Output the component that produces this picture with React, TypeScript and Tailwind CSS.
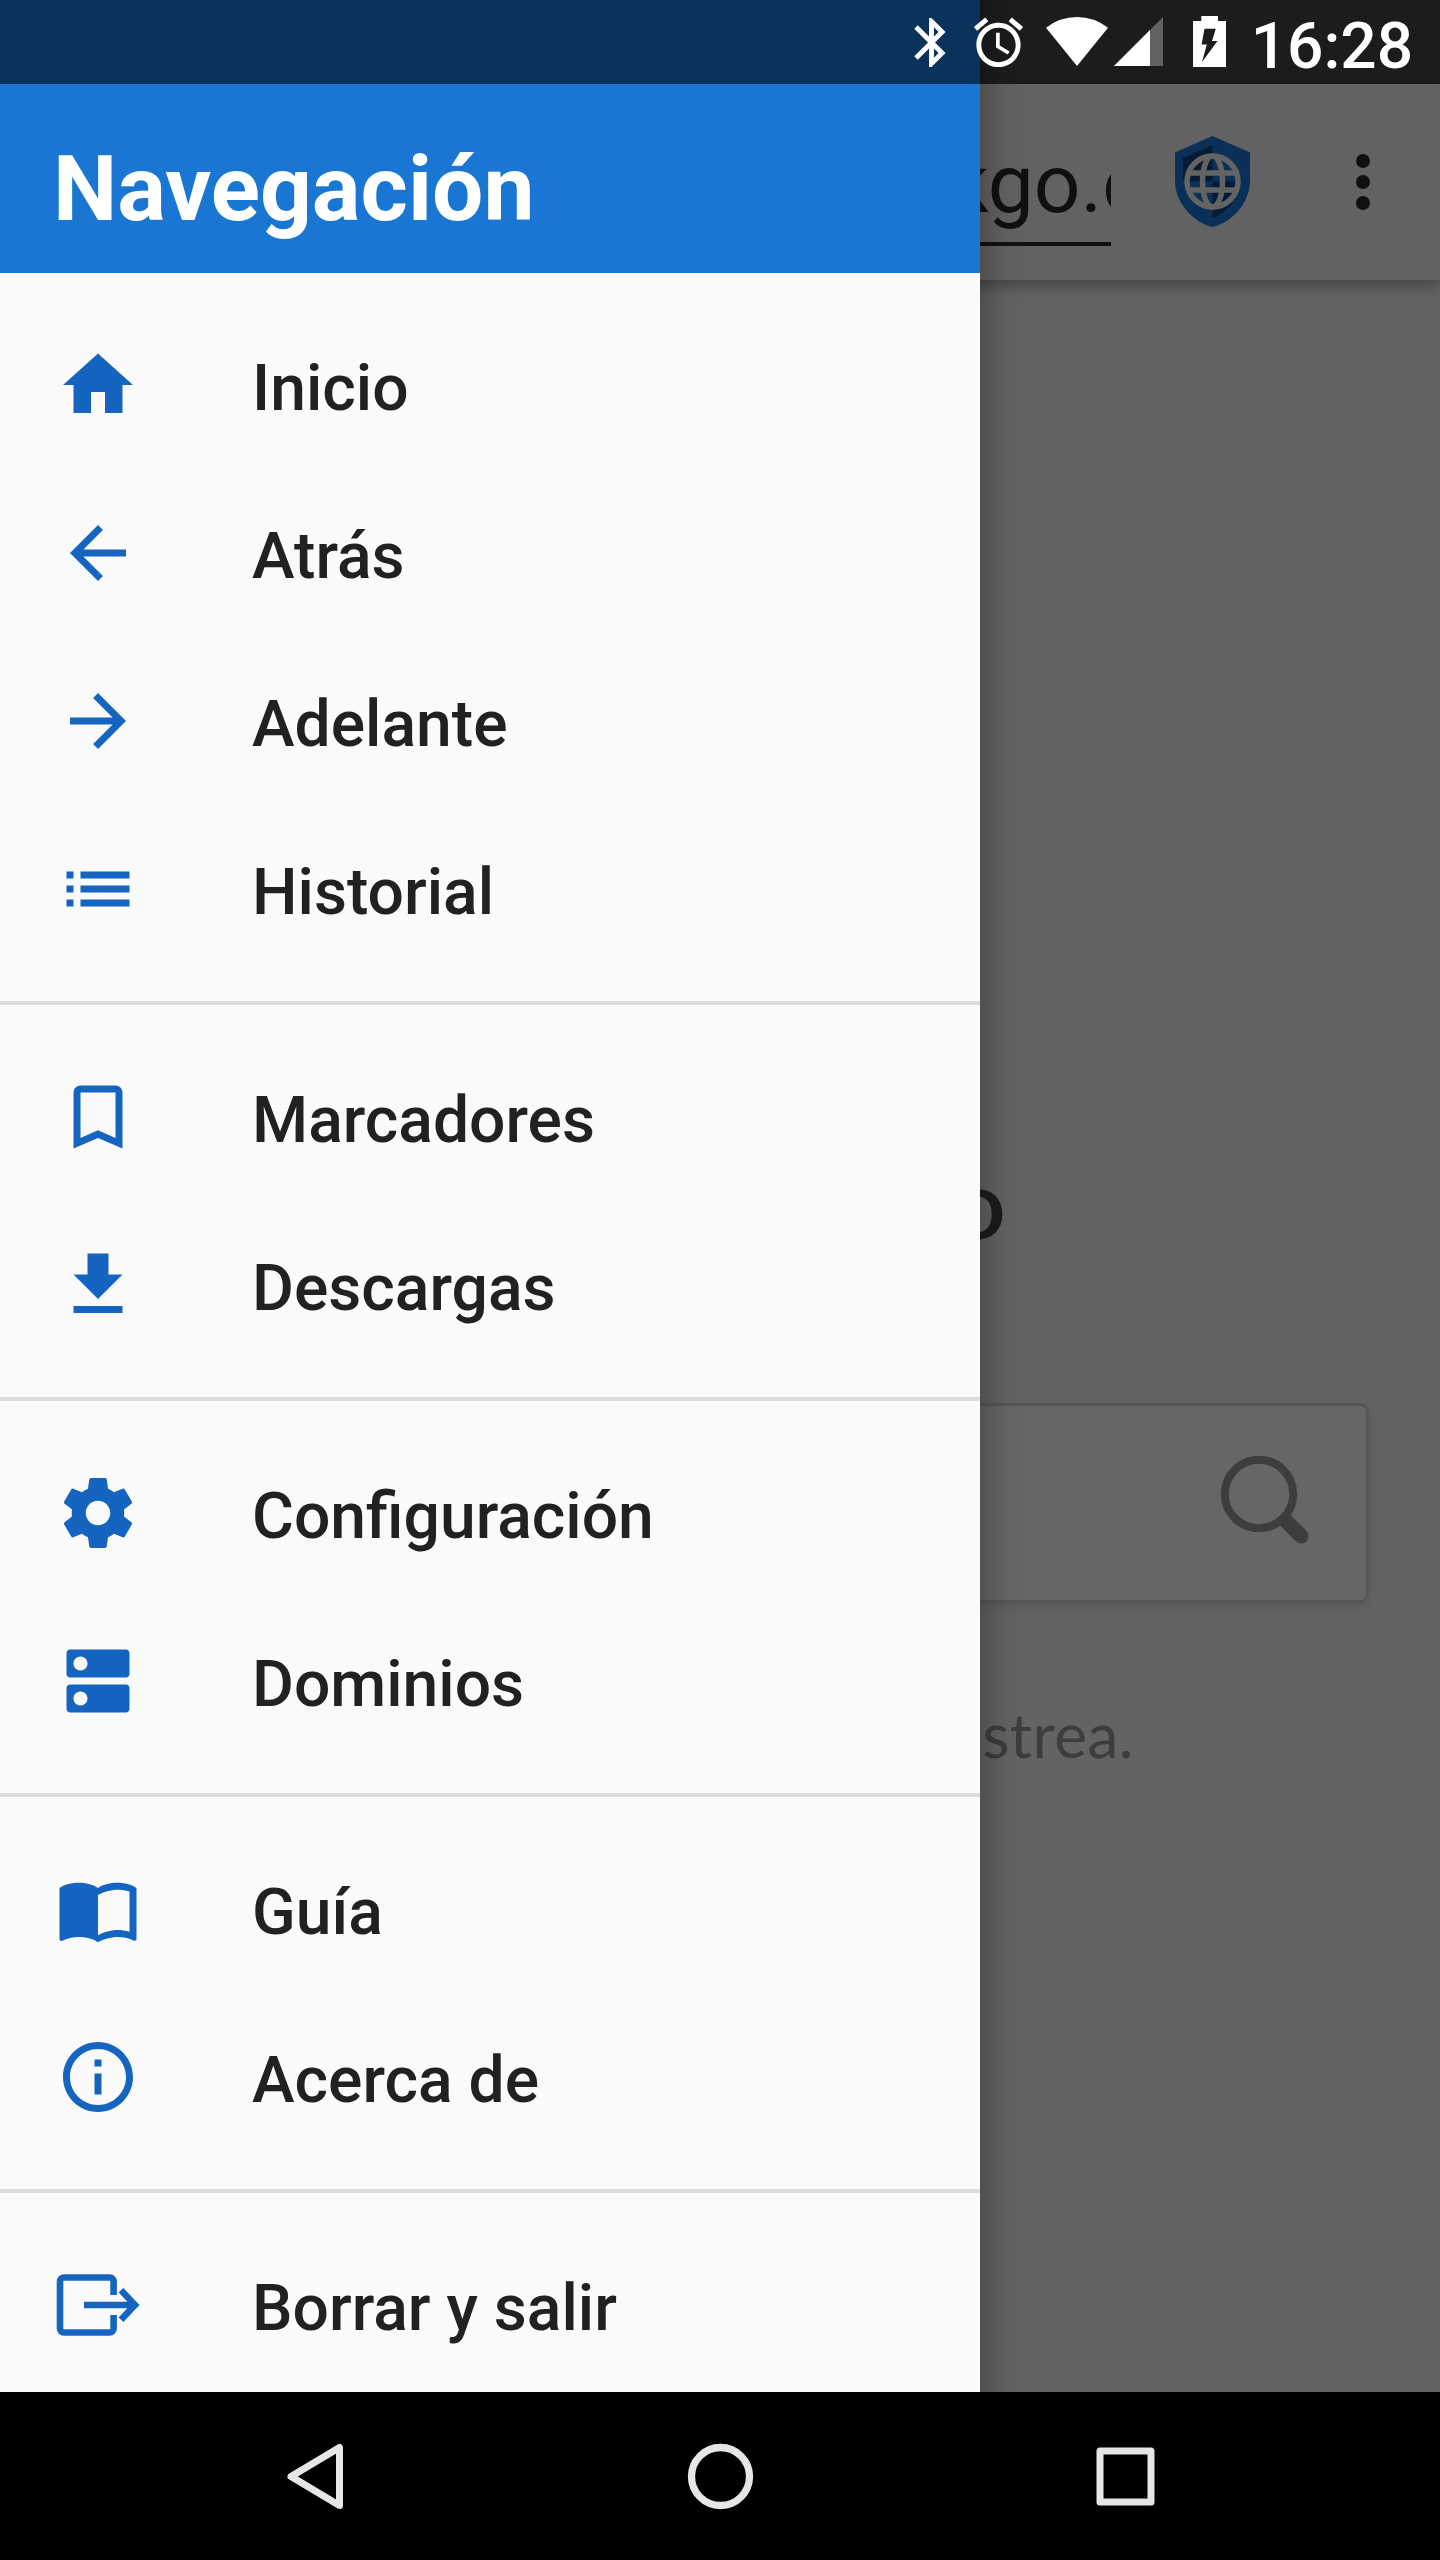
import React from "react";

const ICONS: Record<string, React.ReactNode> = {
  home: <path d="M10 20v-6h4v6h5v-8h3L12 3 2 12h3v8z" />,
  back: <path d="M20 11H7.83l5.59-5.59L12 4l-8 8 8 8 1.41-1.41L7.83 13H20v-2z" />,
  forward: <path d="M12 4l-1.41 1.41L16.17 11H4v2h12.17l-5.58 5.59L12 20l8-8z" />,
  list: <path d="M3 13h2v-2H3v2zm0 4h2v-2H3v2zm0-8h2V7H3v2zm4 4h14v-2H7v2zm0 4h14v-2H7v2zM7 7v2h14V7H7z" />,
  bookmark: <path d="M17 3H7c-1.1 0-1.99.9-1.99 2L5 21l7-3 7 3V5c0-1.1-.9-2-2-2zm0 15l-5-2.18L7 18V5h10v13z" />,
  download: <path d="M19 9h-4V3H9v6H5l7 7 7-7zM5 18v2h14v-2H5z" />,
  settings: (
    <path d="M19.43 12.98c.04-.32.07-.64.07-.98s-.03-.66-.07-.98l2.11-1.65c.19-.15.24-.42.12-.64l-2-3.46c-.12-.22-.39-.3-.61-.22l-2.49 1c-.52-.4-1.08-.73-1.69-.98l-.38-2.65C14.46 2.18 14.25 2 14 2h-4c-.25 0-.46.18-.49.42l-.38 2.65c-.61.25-1.17.59-1.69.98l-2.49-1c-.23-.09-.49 0-.61.22l-2 3.46c-.13.22-.07.49.12.64l2.11 1.65c-.04.32-.07.65-.07.98s.03.66.07.98l-2.11 1.65c-.19.15-.24.42-.12.64l2 3.46c.12.22.39.3.61.22l2.49-1c.52.4 1.08.73 1.69.98l.38 2.65c.03.24.24.42.49.42h4c.25 0 .46-.18.49-.42l.38-2.65c.61-.25 1.17-.59 1.69-.98l2.49 1c.23.09.49 0 .61-.22l2-3.46c.12-.22.07-.49-.12-.64l-2.11-1.65zM12 15.5c-1.93 0-3.5-1.57-3.5-3.5s1.57-3.5 3.5-3.5 3.5 1.57 3.5 3.5-1.57 3.5-3.5 3.5z" />
  ),
  dns: (
    <path d="M20 13H4c-.55 0-1 .45-1 1v6c0 .55.45 1 1 1h16c.55 0 1-.45 1-1v-6c0-.55-.45-1-1-1zM7 19c-1.1 0-2-.9-2-2s.9-2 2-2 2 .9 2 2-.9 2-2 2zM20 3H4c-.55 0-1 .45-1 1v6c0 .55.45 1 1 1h16c.55 0 1-.45 1-1V4c0-.55-.45-1-1-1zM7 9c-1.1 0-2-.9-2-2s.9-2 2-2 2 .9 2 2-.9 2-2 2z" />
  ),
  book: (
    <path d="M21 5c-1.11-.35-2.33-.5-3.5-.5-1.95 0-4.05.4-5.5 1.5-1.45-1.1-3.55-1.5-5.5-1.5S2.45 4.9 1 6v14.65c0 .25.25.5.5.5.1 0 .15-.05.25-.05C3.1 20.45 5.05 20 6.5 20c1.95 0 4.05.4 5.5 1.5 1.35-.85 3.8-1.5 5.5-1.5 1.65 0 3.35.3 4.75 1.05.1.05.15.05.25.05.25 0 .5-.25.5-.5V6c-.6-.45-1.25-.75-2-1zm0 13.5c-1.1-.35-2.3-.5-3.5-.5-1.7 0-4.15.65-5.5 1.5V8c1.35-.85 3.8-1.5 5.5-1.5 1.2 0 2.4.15 3.5.5v11.5z" />
  ),
  info: (
    <path d="M11 17h2v-6h-2v6zm1-15C6.48 2 2 6.48 2 12s4.48 10 10 10 10-4.48 10-10S17.52 2 12 2zm0 18c-4.41 0-8-3.59-8-8s3.59-8 8-8 8 3.59 8 8-3.59 8-8 8zM11 9h2V7h-2v2z" />
  ),
  exit: (
    <g transform="scale(0.285714)" fill="none" stroke="currentColor" strokeWidth="6.6">
      <path d="M57.6 32V18.5a4 4 0 0 0-4-4H8a4 4 0 0 0-4 4v47a4 4 0 0 0 4 4h45.6a4 4 0 0 0 4-4V52" />
      <path d="M28 42h51M65 27.3L79 42 65 56.7" />
    </g>
  ),
};

const SECTIONS = [
  [["home", "Inicio"], ["back", "Atrás"], ["forward", "Adelante"], ["list", "Historial"]],
  [["bookmark", "Marcadores"], ["download", "Descargas"]],
  [["settings", "Configuración"], ["dns", "Dominios"]],
  [["book", "Guía"], ["info", "Acerca de"]],
  [["exit", "Borrar y salir"]],
];

function StatusIcons() {
  return (
    <div className="flex h-[84px] items-start justify-end pr-[27px] text-white">
      <svg className="mt-[13px] size-[59px]" viewBox="0 0 24 24" fill="currentColor">
        <path d="M17.71 7.71L12 2h-1v7.59L6.41 5 5 6.41 10.59 12 5 17.59 6.41 19 11 14.41V22h1l5.71-5.71-4.3-4.29 4.3-4.29zM13 5.83l1.88 1.88L13 9.59V5.83zm1.88 10.46L13 18.17v-3.76l1.88 1.88z" />
      </svg>
      <svg className="mt-[13px] ml-[8px] size-[59px]" viewBox="0 0 24 24" fill="currentColor">
        <path d="M22 5.72l-4.6-3.86-1.29 1.53 4.6 3.86L22 5.72zM7.88 3.39L6.6 1.86 2 5.71l1.29 1.53 4.59-3.85zM12.5 8H11v6l4.75 2.85.75-1.23-4-2.37V8zM12 4c-4.97 0-9 4.03-9 9s4.02 9 9 9c4.97 0 9-4.03 9-9s-4.03-9-9-9zm0 16c-3.87 0-7-3.13-7-7s3.13-7 7-7 7 3.13 7 7-3.13 7-7 7z" />
      </svg>
      <svg className="mt-[17px] ml-[18px] h-[49px] w-[62px]" viewBox="0 0 62 49" fill="currentColor">
        <path d="M31 49L0 10.7Q14 0 31 0T62 10.7z" />
      </svg>
      <svg className="mt-[17px] ml-[6px] h-[49px] w-[49px]" viewBox="0 0 49 49">
        <path d="M49 0v49H0z" fill="#626262" />
        <path d="M36 13v36H0z" fill="currentColor" />
      </svg>
      <svg className="mt-[16px] ml-[30px] h-[51px] w-[33px]" viewBox="0 0 33 51">
        <path d="M8.3 0h16.7v5H33v46H0V5h8.3z" fill="currentColor" />
        <path d="M11.5 12.7h11.3L19 25h5.5L9 46l4.8-17.5H8.6z" fill="#1c1c1c" />
      </svg>
      <span className="mt-[9px] ml-[25px] text-[64px] leading-[75px] font-medium">16:28</span>
    </div>
  );
}

function Shield() {
  return (
    <svg className="h-[91px] w-[75px]" viewBox="0 0 75 91">
      <path d="M37.5 0L75 16.5V45C75 66 58 86 37.5 91 17 86 0 66 0 45V16.5z" fill="#0a3057" />
      <path d="M37.5 9v36H8V22z" fill="#051a35" />
      <path d="M37.5 82C50 77 60 66 64 55L37.5 60z" fill="#051a35" />
      <circle cx="37.5" cy="45.5" r="25.5" fill="#0a3057" />
      <path d="M37.5 45.5H63A25.5 25.5 0 0 1 37.5 71z" fill="#051a35" />
      <path d="M37.5 20v25.5H12A25.5 25.5 0 0 1 37.5 20z" fill="#051a35" />
      <g fill="none" stroke="#636363" strokeWidth="5.5">
        <circle cx="37.5" cy="45.5" r="25.5" />
        <ellipse cx="37.5" cy="45.5" rx="10" ry="25.5" />
        <path d="M15 37h45M15 54h45" />
      </g>
    </svg>
  );
}

function Page() {
  return (
    <div className="flex h-[2392px] flex-col bg-[#636363]">
      <div className="h-[84px] shrink-0 bg-[#1c1c1c]" />
      <div className="flex h-[196px] shrink-0 bg-[#626262] shadow-[0_6px_14px_rgba(0,0,0,0.3)]">
        <div className="flex h-[162px] w-[1111px] overflow-hidden border-b-4 border-[#101010] pl-[947px] text-[82px] leading-[96px] text-[#101010]">
          <span className="mt-[52px] whitespace-nowrap">kgo.c</span>
        </div>
        <div className="mt-[52px] ml-[64px]">
          <Shield />
        </div>
        <div className="mt-[70px] ml-[106px] flex flex-col gap-[7px]">
          <i className="block size-[14px] rounded-full bg-[#101010]" />
          <i className="block size-[14px] rounded-full bg-[#101010]" />
          <i className="block size-[14px] rounded-full bg-[#101010]" />
        </div>
      </div>
      <div className="mt-[864px] flex w-[1007px] justify-end font-[Lato] text-[96px] leading-[116px] font-medium text-[#1c1c1c]">
        <span className="origin-right scale-x-110">o</span>
      </div>
      <div className="mt-[143px] ml-[71px] flex h-[200px] w-[1298px] items-start justify-end rounded-[9px] border-[3px] border-[#575757] bg-[#666666] pt-[50px] pr-[56px] shadow-[0_4px_12px_rgba(0,0,0,0.1)]">
        <svg className="h-[90px] w-[90px]" viewBox="0 0 90 90" fill="none" stroke="#3d3d3d">
          <circle cx="39" cy="38" r="34.2" strokeWidth="8" />
          <path d="M65 64l16 16" strokeWidth="15" strokeLinejoin="round" />
          <path d="M78 77l3.5 3.5" strokeWidth="14" strokeLinecap="round" />
        </svg>
      </div>
      <div className="mt-[91px] flex w-[1134px] justify-end font-[Lato] text-[62px] leading-[80px] tracking-[0.5px] whitespace-nowrap text-[#3d3d3d]">
        strea.
      </div>
    </div>
  );
}

function Drawer() {
  return (
    <aside className="absolute top-0 left-0 h-[2392px] w-[980px] overflow-hidden bg-[#fafafa]">
      <div className="h-[84px] bg-[#0a335c]" />
      <div className="flex h-[189px] items-center bg-[#1976d3] pt-[21px] pl-[53px] text-[91px] font-bold text-white">Navegación</div>
      {SECTIONS.map((items, i) => (
        <ul key={i} className={i ? "border-t-4 border-[#dcdcdc] py-[28px]" : "py-[28px]"}>
          {items.map(([icon, label]) => (
            <li key={label} className="flex h-[168px] items-center pl-[56px]">
              <svg className="size-[84px] text-[#1565c0]" viewBox="0 0 24 24" fill="currentColor">
                {ICONS[icon]}
              </svg>
              <span className="ml-[112px] pt-[6px] text-[64.2px] leading-[75px] font-medium text-[#212121]">{label}</span>
            </li>
          ))}
        </ul>
      ))}
    </aside>
  );
}

export default function App() {
  return (
    <div className="relative h-[2560px] w-[1440px] overflow-hidden bg-black font-[Roboto]">
      <Page />
      <div className="absolute top-0 left-[980px] h-[2392px] w-[46px] bg-linear-to-r from-black/20 via-black/5 to-transparent" />
      <Drawer />
      <div className="absolute top-0 left-0 w-full">
        <StatusIcons />
      </div>
      <nav className="flex h-[168px] items-center justify-center gap-[306px]">
        <svg className="size-[98px]" viewBox="0 0 98 98" fill="none" stroke="#e6e6e6" strokeWidth="7" strokeLinejoin="round">
          <path d="M72.5 20.5v58L24 49.5z" />
        </svg>
        <svg className="size-[98px]" viewBox="0 0 98 98" fill="none" stroke="#e6e6e6" strokeWidth="7.3">
          <circle cx="49.5" cy="49.5" r="29" />
        </svg>
        <svg className="size-[98px]" viewBox="0 0 98 98" fill="none" stroke="#e6e6e6" strokeWidth="7" strokeLinejoin="round">
          <rect x="25" y="24" width="51" height="51" />
        </svg>
      </nav>
    </div>
  );
}
